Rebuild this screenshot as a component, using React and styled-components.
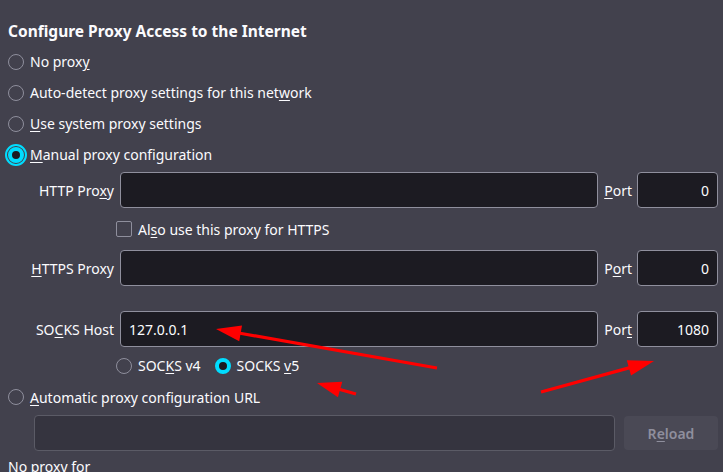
import React from 'react';
import styled, { createGlobalStyle, css } from 'styled-components';

const GlobalStyle = createGlobalStyle`
  html, body {
    margin: 0;
    background: #42414d;
    color: #fbfbfe;
    font-family: "Noto Sans", "DejaVu Sans", sans-serif;
    font-size: 14px;
  }
  body { overflow: hidden; }
`;

const Page = styled.div`
  position: relative;
  width: 723px;
  height: 472px;
  padding: 0 5px 0 8px;
  box-sizing: border-box;
  overflow: hidden;
`;

const Title = styled.h2`
  margin: 0;
  padding-top: 16px;
  height: 30px;
  line-height: 30px;
  font-size: 15.5px;
  font-weight: 700;
`;

const RadioRow = styled.label`
  display: flex;
  align-items: center;
  gap: 6px;
  height: ${({ $h }) => $h || 31}px;
`;

const RadioDot = styled.span`
  box-sizing: border-box;
  width: 16px;
  height: 16px;
  border-radius: 50%;
  border: 1.5px solid #8f8f9d;
  flex-shrink: 0;
  ${({ $checked }) =>
    $checked &&
    css`
      border: 4px solid #00ddff;
      background: #1c1b22;
    `}
  ${({ $focused }) =>
    $focused &&
    css`
      outline: 2px solid #00ddff;
      outline-offset: 1px;
    `}
`;

const Key = styled.u`
  text-decoration-thickness: 1px;
  text-underline-offset: 2px;
`;

const Fields = styled.div`
  display: grid;
  grid-template-columns: 80px 1fr auto 81px;
  column-gap: 6px;
  padding-left: 26px;
  margin-top: 2px;
`;

const FieldLabel = styled.span`
  display: flex;
  align-items: center;
  justify-content: flex-end;
  height: 36px;
  white-space: nowrap;
`;

const PortLabel = styled(FieldLabel)`
  margin-right: -1px;
`;

const TextBox = styled.div`
  box-sizing: border-box;
  height: 36px;
  display: flex;
  align-items: center;
  justify-content: ${({ $end }) => ($end ? 'flex-end' : 'flex-start')};
  padding: 0 8px;
  border: 1px solid #8f8f9d;
  border-radius: 4px;
  background: #1c1b22;
  color: #fbfbfe;
`;

const SubRow = styled.div`
  grid-column: 2 / 5;
  display: flex;
  align-items: center;
  gap: 6px;
  height: ${({ $h }) => $h}px;
  margin-left: -4px;
`;

const Gap = styled.div`
  grid-column: 1 / 5;
  height: ${({ $h }) => $h}px;
`;

const CheckBox = styled.span`
  box-sizing: border-box;
  width: 16px;
  height: 16px;
  border: 1.5px solid #8f8f9d;
  border-radius: 2px;
  flex-shrink: 0;
`;

const Version = styled.span`
  display: flex;
  align-items: center;
  gap: 6px;
  margin-right: 8px;
`;

const UrlRow = styled.div`
  display: flex;
  align-items: center;
  gap: 9px;
  padding-left: 26px;
  margin-top: 5px;
`;

const UrlBox = styled(TextBox)`
  flex: 1;
  background: #35343f;
  border-color: #5b5b66;
`;

const Button = styled.div`
  width: 94px;
  height: 34px;
  border-radius: 4px;
  background: #4a4955;
  color: #8f8f9d;
  display: flex;
  align-items: center;
  justify-content: center;
  font-weight: 600;
`;

const Note = styled.div`
  margin-top: 6px;
  line-height: 20px;
`;

const Overlay = styled.svg`
  position: absolute;
  inset: 0;
  pointer-events: none;
`;

const arrows = [
  { x1: 437, y1: 368, x2: 216, y2: 329, head: 25 },
  { x1: 356, y1: 394, x2: 317, y2: 383, head: 24 },
  { x1: 541, y1: 392, x2: 654, y2: 361, head: 26 },
];

function Arrow({ x1, y1, x2, y2, head }) {
  const len = Math.hypot(x2 - x1, y2 - y1);
  const ux = (x2 - x1) / len;
  const uy = (y2 - y1) / len;
  const bx = x2 - ux * head;
  const by = y2 - uy * head;
  const w = 8;
  const pts = `${x2},${y2} ${bx - uy * w},${by + ux * w} ${bx + uy * w},${by - ux * w}`;
  return (
    <g>
      <line x1={x1} y1={y1} x2={bx + ux * 2} y2={by + uy * 2} stroke="#ff0000" strokeWidth="3.2" />
      <polygon points={pts} fill="#ff0000" />
    </g>
  );
}

export default function App() {
  return (
    <Page>
      <GlobalStyle />
      <Title>Configure Proxy Access to the Internet</Title>
      <RadioRow><RadioDot /><span>No prox<Key>y</Key></span></RadioRow>
      <RadioRow><RadioDot /><span>Auto-detect proxy settings for this net<Key>w</Key>ork</span></RadioRow>
      <RadioRow><RadioDot /><span><Key>U</Key>se system proxy settings</span></RadioRow>
      <RadioRow><RadioDot $checked $focused /><span><Key>M</Key>anual proxy configuration</span></RadioRow>

      <Fields>
        <FieldLabel><span>HTTP Pro<Key>x</Key>y</span></FieldLabel>
        <TextBox />
        <PortLabel><span><Key>P</Key>ort</span></PortLabel>
        <TextBox $end>0</TextBox>

        <SubRow $h={42}><CheckBox /><span>Al<Key>s</Key>o use this proxy for HTTPS</span></SubRow>

        <FieldLabel><span><Key>H</Key>TTPS Proxy</span></FieldLabel>
        <TextBox />
        <PortLabel><span>P<Key>o</Key>rt</span></PortLabel>
        <TextBox $end>0</TextBox>

        <Gap $h={25} />

        <FieldLabel><span>SO<Key>C</Key>KS Host</span></FieldLabel>
        <TextBox>127.0.0.1</TextBox>
        <PortLabel><span>Por<Key>t</Key></span></PortLabel>
        <TextBox $end>1080</TextBox>

        <SubRow $h={37}>
          <Version><RadioDot /><span>SOC<Key>K</Key>S v4</span></Version>
          <Version><RadioDot $checked /><span>SOCKS <Key>v</Key>5</span></Version>
        </SubRow>
      </Fields>

      <RadioRow $h={26}><RadioDot /><span><Key>A</Key>utomatic proxy configuration URL</span></RadioRow>
      <UrlRow>
        <UrlBox />
        <Button><span>R<Key>e</Key>load</span></Button>
      </UrlRow>
      <Note>No proxy for</Note>

      <Overlay width="723" height="472">
        {arrows.map((a, i) => <Arrow key={i} {...a} />)}
      </Overlay>
    </Page>
  );
}
